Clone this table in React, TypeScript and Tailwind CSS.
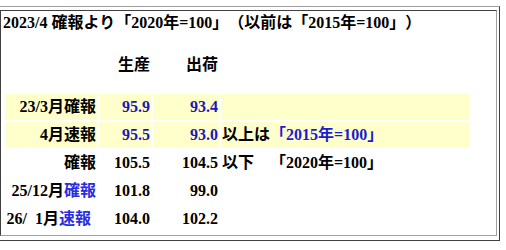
const BLUE_NUM = "text-[#1818b8]";
const BLUE_LBL = "text-[#2b2be0]";

type Row = {
  label: React.ReactNode;
  prod: string;
  ship: string;
  note?: React.ReactNode;
  hi?: boolean;
  pr?: string;
};

const rows: Row[] = [
  { label: "23/3月確報", prod: "95.9", ship: "93.4", hi: true },
  {
    label: "4月速報",
    prod: "95.5",
    ship: "93.0",
    hi: true,
    note: (
      <>
        以上は<span className="text-[#1c1cd0]">「2015年=100」</span>
      </>
    ),
  },
  { label: "確報", prod: "105.5", ship: "104.5", note: "以下　「2020年=100」" },
  {
    label: (
      <>
        25/12月<span className={BLUE_LBL}>確報</span>
      </>
    ),
    prod: "101.8",
    ship: "99.0",
  },
  {
    label: (
      <>
        26/&nbsp; 1月<span className={BLUE_LBL}>速報</span>
      </>
    ),
    prod: "104.0",
    ship: "102.2",
    pr: "pr-[6px]",
  },
];

export default function App() {
  return (
    <div className="min-h-screen bg-white pt-[6px] font-['Liberation_Serif','Noto_Sans_CJK_JP',serif] text-[16px] font-bold leading-[20px] text-black [text-spacing-trim:space-all]">
      <div className="w-[500px] border-t border-r border-b border-t-[#a0a0a0] border-r-[#404040] border-b-[#404040] pt-[3px] pr-[2px] pb-[4px]">
        <div className="border border-t-[#404040] border-l-[#404040] border-r-[#a0a0a0] border-b-[#a0a0a0] pb-[1px]">
          <div className="pt-[2px] pl-[2px] whitespace-nowrap">
            2023/4 確報より「2020年=100」（以前は「2015年=100」）
          </div>

          <table className="mt-[17px] ml-[2px] w-[469px] table-fixed border-separate border-spacing-[2px]">
            <colgroup>
              <col className="w-[92px]" />
              <col className="w-[52px]" />
              <col className="w-[66px]" />
              <col className="w-[249px]" />
            </colgroup>
            <tbody>
              <tr className="h-[26px]">
                <td />
                <td className="px-[1px] text-right">生産</td>
                <td className="px-[1px] text-right">出荷</td>
                <td />
              </tr>
              <tr className="h-[12px]">
                <td colSpan={4} />
              </tr>
              {rows.map((r, i) => (
                <tr key={i} className="h-[26px]">
                  <td className={`whitespace-nowrap px-[1px] text-right ${r.hi ? "bg-[#ffffcc]" : ""} ${r.pr ?? ""}`}>
                    {r.label}
                  </td>
                  <td className={`px-[1px] text-right ${r.hi ? `bg-[#ffffcc] ${BLUE_NUM}` : ""}`}>{r.prod}</td>
                  <td className={`px-[1px] text-right ${r.hi ? `bg-[#ffffcc] ${BLUE_NUM}` : ""}`}>{r.ship}</td>
                  <td className={`whitespace-nowrap px-[1px] ${r.hi ? "bg-[#ffffcc]" : ""}`}>{r.note}</td>
                </tr>
              ))}
            </tbody>
          </table>
        </div>
      </div>
    </div>
  );
}
